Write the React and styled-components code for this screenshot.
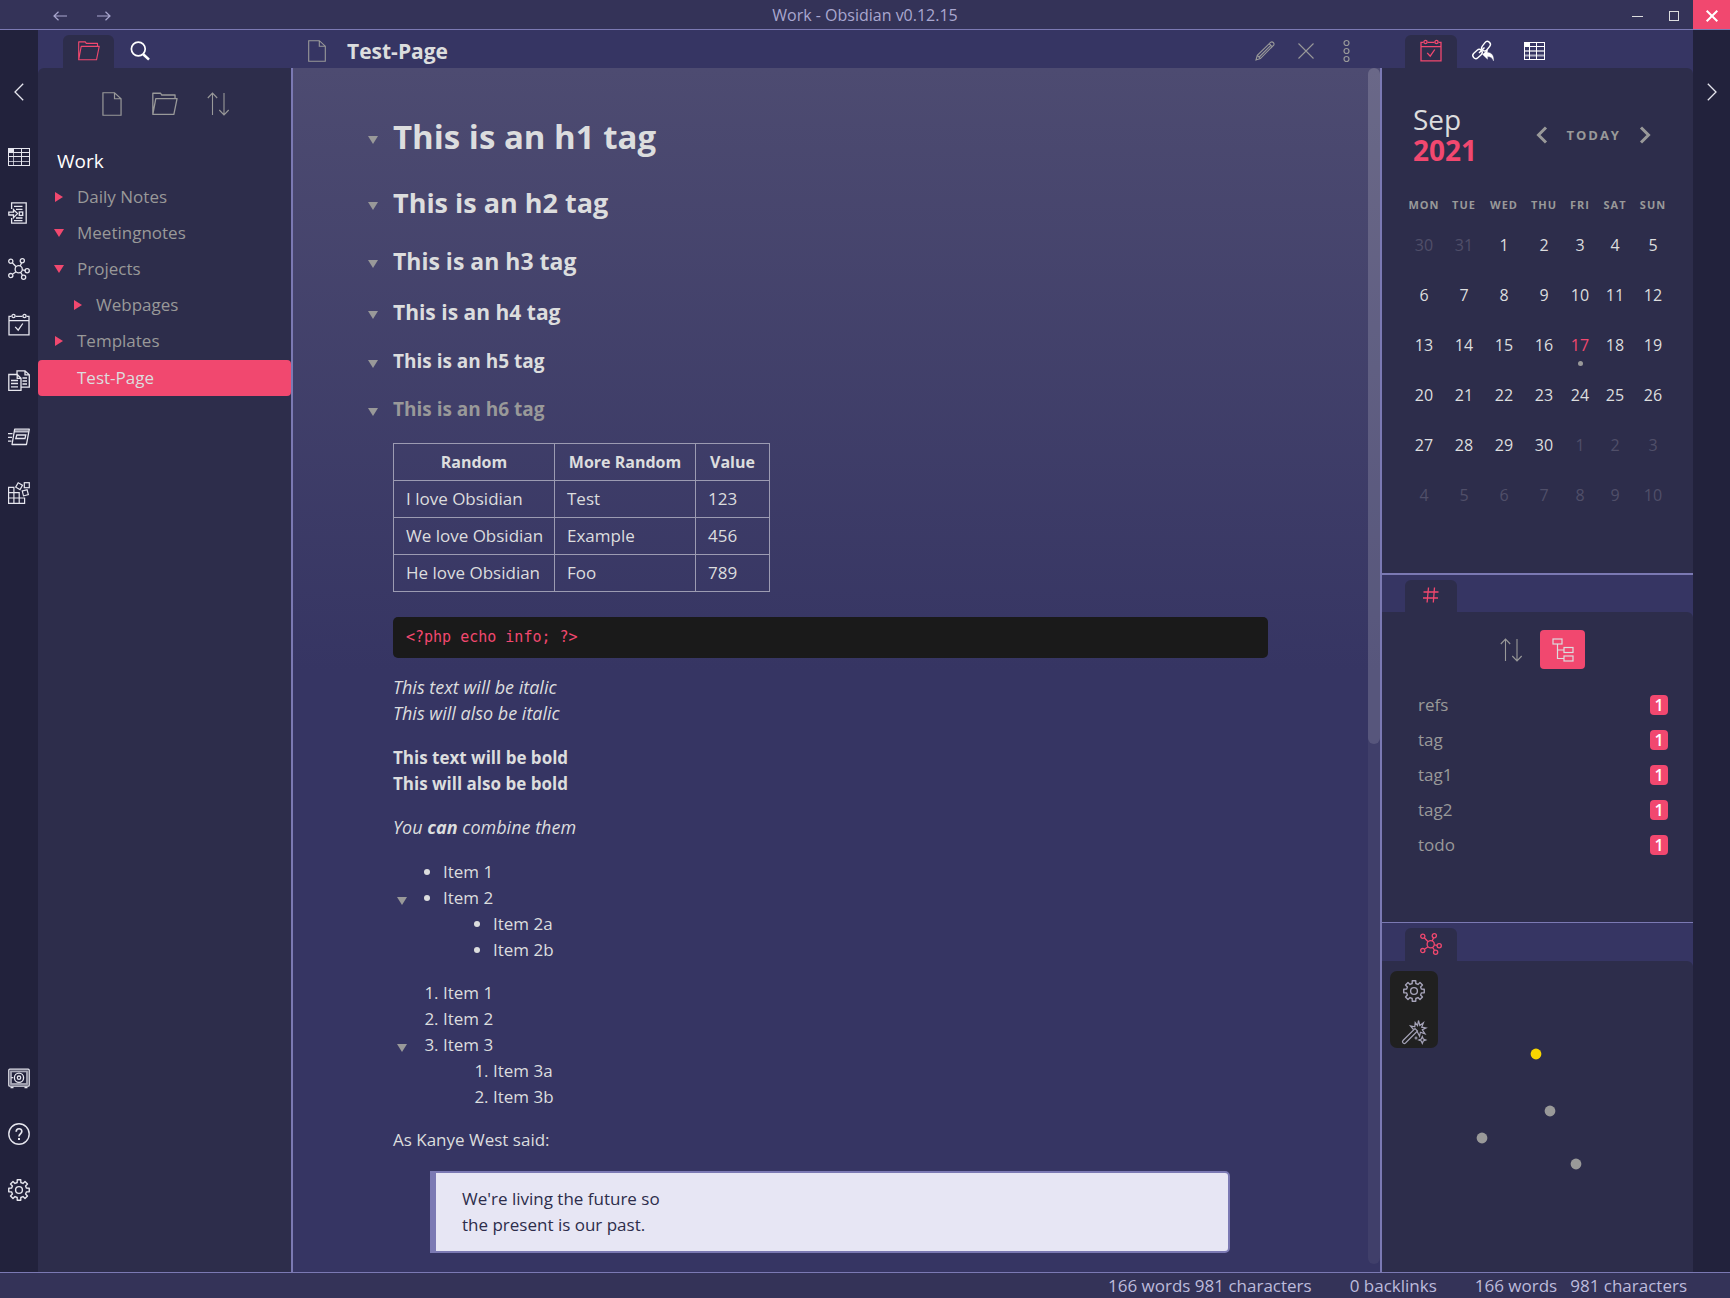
import React from "react";
import styled, { createGlobalStyle, css } from "styled-components";

const c = {
  accent: "#f1486f",
  line: "#7b79b3",
  bar: "#343358",
  header: "#363563",
  panel: "#2d2d4b",
  ribbon: "#22223c",
  text: "#dcddde",
  muted: "#999999",
  faint: "#504f69",
  status: "#bdbbdc",
};

const Global = createGlobalStyle`
  *, *::before, *::after { box-sizing: border-box; }
  body {
    margin: 0;
    background: ${c.panel};
    color: ${c.text};
    font: 17px/26px "Open Sans", "Noto Sans", sans-serif;
  }
  button {
    margin: 0;
    padding: 0;
    border: 0;
    background: none;
    color: inherit;
    font: inherit;
    cursor: pointer;
  }
`;

/* ---------- icons ---------- */

const Svg = styled.svg`
  display: block;
  flex: none;
  fill: none;
  stroke: currentColor;
  stroke-width: ${(p) => p.$stroke ?? 1.3};
  overflow: visible;
`;

const Icon = ({ w = 22, h = 22, stroke, children }) => (
  <Svg width={w} height={h} viewBox={`0 0 ${w} ${h}`} $stroke={stroke} aria-hidden="true">
    {children}
  </Svg>
);

const gearPath = (() => {
  const pts = [];
  const teeth = 8;
  for (let i = 0; i < teeth; i++) {
    const a = (i * 2 * Math.PI) / teeth - Math.PI / 2;
    [
      [-0.24, 7.7],
      [-0.17, 10.4],
      [0.17, 10.4],
      [0.24, 7.7],
    ].forEach(([d, r]) => pts.push(`${(11 + r * Math.cos(a + d)).toFixed(2)} ${(11 + r * Math.sin(a + d)).toFixed(2)}`));
  }
  return `M${pts.join("L")}Z`;
})();

const GearIcon = () => (
  <Icon stroke={1.4}>
    <path d={gearPath} strokeLinejoin="round" />
    <circle cx="11" cy="11" r="3.4" />
  </Icon>
);

const GridIcon = () => (
  <Icon stroke={1}>
    <rect x=".5" y="2.5" width="21" height="17" />
    <rect x=".5" y="2.5" width="5" height="4" fill="currentColor" />
    <path d="M5.5 6.5h16M13.5 2.5v17M.5 10.5h21" />
    <path d="M5.5 6.5v13M.5 15.5h21" opacity=".75" />
  </Icon>
);

const TableIcon = () => (
  <Icon stroke={1}>
    <rect x=".5" y="2.5" width="20" height="17" />
    <rect x=".5" y="2.5" width="5" height="4" fill="currentColor" />
    <path d="M5.5 7v12.5M12.5 2.5v17M5.5 6.5h15" />
    <path d="M.5 11h20M.5 15.5h20" strokeWidth="2" opacity=".6" />
  </Icon>
);

const InsertIcon = () => (
  <Icon>
    <path d="M3.6 7V.8h14.6v20.4H3.6V16" />
    <path d="M.8 10.2h4.7V7.6l4 4-4 4V13H.8z" />
    <path d="M6 4.3h8.500M8 7.300h6.500M8 16h6.500M6 18.600h8.500" />
    <rect x="11.3" y="10" width="3.4" height="3.4" />
  </Icon>
);

const GraphIcon = () => (
  <Icon>
    <circle cx="10.7" cy="11.3" r="3.6" />
    <circle cx="2.8" cy="3.2" r="2.1" />
    <circle cx="14.3" cy="2.8" r="2.1" />
    <circle cx="19.2" cy="12.8" r="2.1" />
    <circle cx="15.6" cy="19.3" r="2.1" />
    <circle cx="2.8" cy="17.6" r="2.1" />
    <path d="M4.3 4.7l3.8 4M13.6 4.8l-1.4 3.200M14.300 11.800l2.800.6M12.600 14.400l2 3.100M4.400 16.200l3.700-2.500" />
  </Icon>
);

const CalendarIcon = () => (
  <Icon>
    <path d="M3.4 2.4H1v18.4h20V2.4h-2.4M7.6 2.4h6.8M1 6.7h20" />
    <circle cx="5.5" cy="2" r="1.6" />
    <circle cx="16.5" cy="2" r="1.6" />
    <path d="M7.2 12.9l3 3.3 4.6-6.7" />
  </Icon>
);

const CopyIcon = () => (
  <Icon>
    <path d="M.8 4.5h8.4l3.8 3.8v12H.8zM9.2 4.5v3.8H13" />
    <path d="M9 4.3V.8h8l4.3 4v12.4H13M17 .8v4h4.3" />
    <path d="M3 10.5h7M3 13.5h7M3 16.8h7M14.5 8h4.5M14.5 11h4.5M14.5 14h4.5" />
  </Icon>
);

const CardsIcon = () => (
  <Icon>
    <path d="M6.7 3.2h14.6l-2.8 15.3H4z" strokeLinejoin="round" />
    <path d="M6.4 5.4h14.2" strokeWidth="2.2" opacity=".8" />
    <path d="M8.8 9h9l-.8 3.5H7.8z" />
    <path d="M0 7.6h4.5M0 11.4h4M0 15.2h3.5" />
  </Icon>
);

const BlocksIcon = () => (
  <Icon stroke={1.2}>
    <path d="M.6 5.4h5.3v16H.6zM.6 10.7h10.6v10.7M.6 16h16v5.4H.6M11.2 16v-5.3" />
    <rect x="16.3" y=".7" width="5" height="5" />
    <rect x="8.6" y="1.7" width="5" height="5" transform="rotate(30 11.1 4.2)" />
    <rect x="14.8" y="8.3" width="5" height="5" transform="rotate(-15 17.3 10.8)" />
  </Icon>
);

const VaultIcon = () => (
  <Icon>
    <rect x=".8" y="2.2" width="20.4" height="17" rx="1" />
    <rect x="3" y="4.4" width="16" height="12.6" strokeWidth="1.8" opacity=".7" />
    <circle cx="11" cy="10.7" r="4.6" />
    <circle cx="11" cy="10.7" r="1.7" />
    <path d="M3.2 10.7h2M2.5 20.5h3M16.5 20.5h3" />
  </Icon>
);

const HelpIcon = () => (
  <Icon stroke={1.4}>
    <circle cx="11" cy="11" r="10.2" />
    <path d="M8.2 8.7c0-4 5.8-3.8 5.6-.2-.1 2.4-2.8 2.3-2.8 5" strokeWidth="1.7" />
    <path d="M11 15v1.9" strokeWidth="2" />
  </Icon>
);

const ChevronIcon = ({ right }) => (
  <Icon w={10} h={18}>
    <path d={right ? "M.8 .8L9 9L.8 17.2" : "M9.2 .8L1 9L9.2 17.2"} />
  </Icon>
);

const BoldChevron = ({ right }) => (
  <Icon w={12} h={18} stroke={3}>
    <path d={right ? "M2 1.5L9.5 9L2 16.5" : "M10 1.5L2.5 9L10 16.5"} />
  </Icon>
);

const FolderIcon = ({ w = 22, h = 20 }) => (
  <Svg width={w} height={h} viewBox="0 0 22 20" $stroke={1.1} aria-hidden="true">
    <path d="M.7 18.8V.9h6.6l1 1.5h11.2v3M.7 18.8h17.8L21.2 5.4H3.2z" strokeLinejoin="round" />
  </Svg>
);

const FileIcon = ({ w = 18, h = 22 }) => (
  <Svg width={w} height={h} viewBox="0 0 18 22" $stroke={1.1} aria-hidden="true">
    <path d="M.7 .7h10.6l6 5.5v15.1H.7zM11.3 .7v5.5h6" />
  </Svg>
);

const SearchIcon = () => (
  <Icon w={20} h={20} stroke={1.7}>
    <circle cx="8.3" cy="8" r="6.9" />
    <path d="M13.2 13.2l5.8 5.4" strokeWidth="2.6" />
  </Icon>
);

const SortIcon = () => (
  <Icon w={22} h={24} stroke={1.1}>
    <path d="M5.5 23V1M.8 6l4.7-5 4.7 5M17 1v22M12.3 18l4.7 5 4.7-5" />
  </Icon>
);

const TreeIcon = () => (
  <Icon w={22} h={24} stroke={1.2}>
    <rect x="1" y="1" width="9" height="5" />
    <rect x="12" y="9.5" width="9" height="5" />
    <rect x="12" y="18" width="9" height="5" />
    <path d="M5.5 6v14.5H12M5.5 12H12" />
  </Icon>
);

const PencilIcon = () => (
  <Icon w={20} h={20} stroke={1.1}>
    <path d="M1 19l1.3-4.6L15.8 1.2c1.6-1.2 4 1 2.9 2.9L5.4 17.6zM2.3 14.4l3.1 3.2M14.3 2.7l3 3.1M4.2 16L15.8 4.4" />
  </Icon>
);

const CrossIcon = () => (
  <Icon w={16} h={16} stroke={1.1}>
    <path d="M.5 .5l15 15M15.5 .5l-15 15" />
  </Icon>
);

const MoreIcon = () => (
  <Icon w={7} h={22} stroke={1.2}>
    <circle cx="3.5" cy="3" r="2.5" />
    <circle cx="3.5" cy="11" r="2.5" />
    <circle cx="3.5" cy="19" r="2.5" />
  </Icon>
);

const BacklinkIcon = () => (
  <Icon stroke={1.4}>
    <rect x="8.8" y="3.2" width="10.4" height="6" rx="3" transform="rotate(-52 14 6.2)" />
    <rect x=".3" y="11" width="10.4" height="6" rx="3" transform="rotate(-42 5.5 14)" />
    <path d="M7 13l5.5-5.5" />
    <path d="M10.5 14.5l5-4.7v2.6c4.5.2 6.5 3.7 6 8.6-1-3-2.8-4.4-6-4.4v2.7z" fill="currentColor" strokeWidth=".3" />
  </Icon>
);

const HashIcon = () => (
  <Icon w={16} h={16}>
    <path d="M5.5 .5l-1.4 15M11.5 .5l-1.2 15M.5 5h15M0 11h15" />
  </Icon>
);

const WandIcon = () => (
  <Icon w={24} h={24} stroke={1.2}>
    <path d="M1 20.5L13 8.5l2.5 2.5L3.5 23c-1.8 1.5-4-.8-2.5-2.5z" />
    <path d="M11.5 9.5L8.5 6l4.3.8L13.2 2.5l2.3 3L16.5.5l1.3 5 3.6-2.7-1.7 4.4L24 8l-3.7 1.8 2.7 4-4.6-1.6-.8 4-2.6-5" />
    <path d="M20.3 16.5l1 2.5 2.5 1-2.5 1-1 2.5-1-2.5-2.5-1 2.5-1zM14 16.5v3M12.5 18h3" />
  </Icon>
);

const ArrowIcon = ({ right }) => (
  <Icon w={14} h={10} stroke={1.2}>
    <path d={right ? "M0 5h13M8.5 .8L13 5L8.5 9.2" : "M14 5H1M5.5 .8L1 5L5.5 9.2"} />
  </Icon>
);

const Triangle = ({ right }) => (
  <Svg width="10" height="10" viewBox="0 0 10 10" $stroke={0} aria-hidden="true">
    <path d={right ? "M1 0L9 5L1 10z" : "M0 1h10L5 9z"} fill="currentColor" />
  </Svg>
);

/* ---------- frame ---------- */

const Shell = styled.div`
  display: flex;
  flex-direction: column;
  min-height: 100vh;
`;

const TitleBar = styled.header`
  display: grid;
  grid-template-columns: 1fr auto 1fr;
  align-items: center;
  height: 30px;
  background: ${c.bar};
  border-bottom: 1px solid ${c.line};
  color: #a9a7cf;
`;

const WindowTitle = styled.span`
  font-size: 16px;
  line-height: 24px;
`;

const NavButtons = styled.div`
  display: flex;
  gap: 30px;
  padding: 2px 0 0 53px;
`;

const WindowButtons = styled.div`
  display: flex;
  justify-content: flex-end;
  height: 29px;
`;

const WindowButton = styled.button`
  display: grid;
  place-items: center;
  width: 37px;
  padding-top: 3px;
  color: ${c.text};
  ${(p) => p.$close && css`background: ${c.accent}; color: #fff;`}
`;

const Main = styled.main`
  flex: 1;
  display: flex;
  min-height: 0;
`;

const Ribbon = styled.nav`
  flex: none;
  display: flex;
  flex-direction: column;
  align-items: center;
  width: ${(p) => (p.$right ? 37 : 38)}px;
  padding: 53px 0 71px;
  background: ${c.ribbon};
  color: #e6e6ee;
`;

const RibbonGroup = styled.div`
  display: flex;
  flex-direction: column;
  gap: 34px;
  margin-top: ${(p) => (p.$bottom ? "auto" : "45px")};
`;

const Panel = styled.section`
  display: flex;
  flex-direction: column;
  background: ${c.header};
`;

const Explorer = styled(Panel)`
  flex: none;
  width: 253px;
`;

const Tabs = styled.div`
  flex: none;
  display: flex;
  height: ${(p) => (p.$short ? 37 : 38)}px;
  padding: 5px 0 0 ${(p) => (p.$wide ? 25 : 23)}px;
`;

const Tab = styled.button`
  display: flex;
  justify-content: center;
  align-items: center;
  width: 51px;
  padding-bottom: 2px;
  border-radius: 6px 6px 0 0;
  color: #fff;
  ${(p) => p.$active && css`background: ${c.panel}; color: ${c.accent};`}
`;

const SideTab = styled(Tab)`
  width: 52px;
`;

const PanelBody = styled.div`
  flex: 1;
  background: ${c.panel};
  border-radius: ${(p) => (p.$left ? "6px 0 0 0" : "0 6px 0 0")};
`;

/* ---------- file explorer ---------- */

const Actions = styled.div`
  display: flex;
  justify-content: center;
  align-items: center;
  height: 24px;
  margin-top: 24px;
  color: ${c.muted};
`;

const Action = styled.button`
  display: flex;
  justify-content: center;
  width: 53px;
`;

const VaultName = styled.h2`
  margin: 31px 0 5px 19px;
  color: #fff;
  font-size: 19px;
  font-weight: 400;
  line-height: 28px;
`;

const TreeRow = styled.button`
  display: flex;
  align-items: center;
  gap: 13px;
  width: 100%;
  height: 36px;
  padding: 0 0 2px ${(p) => 16 + p.$depth * 19}px;
  border-radius: 4px;
  color: ${c.muted};
  ${(p) => p.$active && css`background: ${c.accent}; color: ${c.text}; padding: 0 0 0 39px;`}
`;

const Mark = styled.span`
  color: ${c.accent};
`;

/* ---------- editor ---------- */

const Editor = styled.section`
  flex: 1;
  display: flex;
  flex-direction: column;
  min-width: 0;
  background: ${c.header};
`;

const EditorHeader = styled.header`
  flex: none;
  display: flex;
  align-items: center;
  height: 38px;
  padding: 3px 15px 0 17px;
  color: ${c.muted};
`;

const PageTitle = styled.h1`
  flex: 1;
  margin: 0 0 0 21px;
  color: ${c.text};
  font-size: 21px;
  line-height: 28px;
`;

const HeaderActions = styled.div`
  display: flex;
  align-items: center;
`;

const HeaderButton = styled.button`
  display: flex;
  justify-content: center;
  width: 41px;
`;

const EditorBody = styled.div`
  flex: 1;
  display: flex;
  min-height: 0;
  border: solid ${c.line};
  border-width: 0 2px;
  background: linear-gradient(#4d4b71, ${c.header} 50%);
`;

const Article = styled.article`
  flex: 1;
  min-width: 0;
  padding: 49px 100px 10px;

  em { font-size: 18px; line-height: 20px; }
`;

const ScrollTrack = styled.div`
  flex: none;
  width: 12px;
  margin-bottom: 8px;
  border-radius: 6px;
  background: rgba(255, 255, 255, 0.05);
`;

const ScrollThumb = styled.div`
  height: 56.5%;
  border-radius: 6px;
  background: rgba(255, 255, 255, 0.12);
`;

const headingSizes = {
  1: [33, 40, 29],
  2: [27, 34, 26],
  3: [23, 30, 22],
  4: [21, 28, 22],
  5: [19, 26, 22],
  6: [19, 26, 21],
};

const HeadingRow = styled.div`
  display: flex;
  align-items: center;
  margin: 0 0 ${(p) => headingSizes[p.$level][2]}px -26px;
`;

const Fold = styled.button`
  width: 26px;
  padding: 6px 0 0 1px;
  color: ${c.muted};
`;

const Heading = styled.h2`
  margin: 0;
  font-size: ${(p) => headingSizes[p.$level][0]}px;
  line-height: ${(p) => headingSizes[p.$level][1]}px;
  ${(p) => p.$level === 6 && css`color: ${c.muted};`}
`;

const NoteTable = styled.table`
  width: 376px;
  margin: 0 0 25px;
  border-collapse: collapse;
  table-layout: fixed;
`;

const cell = css`
  height: 37px;
  padding: 0 12px;
  border: 1px solid #9c9bb2;
  white-space: nowrap;
`;

const Th = styled.th`
  ${cell}
  font-size: 16px;
`;

const Td = styled.td`
  ${cell}
`;

const CodeBlock = styled.pre`
  margin: 0 0 17px;
  padding: 7px 13px 8px;
  border-radius: 5px;
  background: #1a1a1a;
  color: ${c.accent};
  font: 15px/26px "DejaVu Sans Mono", "Liberation Mono", monospace;
`;

const P = styled.p`
  margin: 0 0 18px;
`;

const listStyle = css`
  margin: 0;
  padding-left: 50px;
  article > & {
    margin-bottom: 17px;
  }
`;

const Ul = styled.ul`
  ${listStyle}
  list-style-type: disc;
`;

const Ol = styled.ol`
  ${listStyle}
`;

const ListFold = styled.button`
  width: 10px;
  height: 10px;
  margin: 0 36px 0 -46px;
  vertical-align: -2px;
  color: ${c.muted};
`;

const Quote = styled.blockquote`
  margin: 18px 38px 0 37px;
  padding: 13px 26px;
  border: 2px solid ${c.line};
  border-left-width: 6px;
  border-radius: 0 5px 5px 0;
  background: #e7e6f4;
  color: #2d2d4b;
`;

/* ---------- right side ---------- */

const Sidebar = styled.aside`
  flex: none;
  display: flex;
  flex-direction: column;
  width: 311px;
`;

const SidePanel = styled(Panel)`
  flex: ${(p) => p.$share} 1 0;
  border-bottom: ${(p) => p.$rule || 0}px solid ${c.line};
`;

const CalendarHead = styled.div`
  display: flex;
  align-items: center;
  justify-content: space-between;
  padding: 36px 42px 0 31px;
`;

const Month = styled.h2`
  margin: 0;
  font-size: 28px;
  font-weight: 400;
  line-height: 31px;
`;

const Year = styled.span`
  display: block;
  color: ${c.accent};
  font-weight: 700;
`;

const MonthNav = styled.div`
  display: flex;
  align-items: center;
  gap: 18px;
  color: ${c.muted};
`;

const Today = styled.button`
  font-size: 13px;
  font-weight: 700;
  line-height: 20px;
  letter-spacing: 2px;
`;

const Days = styled.table`
  width: 270px;
  margin: 30px 0 0 21px;
  border-collapse: collapse;
  table-layout: fixed;
  text-align: center;
`;

const Weekday = styled.th`
  height: 33px;
  padding: 0;
  color: ${c.muted};
  font-size: 11px;
  font-weight: 700;
  line-height: 18px;
  letter-spacing: 1px;
  vertical-align: top;
`;

const DayCell = styled.td`
  height: 50px;
  padding: 0;
  vertical-align: top;
`;

const Day = styled.button`
  width: 100%;
  color: ${(p) => (p.$today ? c.accent : p.$faint ? c.faint : c.text)};
  font-size: 16px;
  line-height: 32px;
`;

const Dot = styled.span`
  display: block;
  width: 5px;
  height: 5px;
  margin: 0 auto;
  border-radius: 50%;
  background: ${c.muted};
`;

const TagTools = styled.div`
  display: flex;
  justify-content: center;
  align-items: center;
  gap: 18px;
  margin: 18px 0;
  padding-left: 10px;
  color: ${c.muted};
`;

const TagToggle = styled.button`
  display: grid;
  place-items: center;
  width: 45px;
  height: 39px;
  border-radius: 4px;
  background: ${c.accent};
  color: ${c.text};
`;

const TagRow = styled.a`
  display: flex;
  align-items: center;
  justify-content: space-between;
  height: 35px;
  padding: 0 25px 0 36px;
  color: ${c.muted};
  text-decoration: none;
`;

const Count = styled.span`
  width: 18px;
  border-radius: 4px;
  background: ${c.accent};
  color: #fff;
  font-size: 16px;
  font-weight: 600;
  line-height: 20px;
  text-align: center;
`;

const GraphBody = styled(PanelBody)`
  display: flex;
  align-items: flex-start;
  padding: 10px 8px;
`;

const GraphTools = styled.div`
  flex: none;
  display: flex;
  flex-direction: column;
  align-items: center;
  gap: 18px;
  width: 48px;
  padding: 9px 0 4px;
  border-radius: 7px;
  background: #202020;
  color: #a5a3b8;
`;

const StatusBar = styled.footer`
  display: flex;
  justify-content: flex-end;
  gap: 38px;
  height: 26px;
  padding-right: 43px;
  border-top: 1px solid ${c.line};
  background: ${c.bar};
  color: ${c.status};
`;

const StatusPair = styled.span`
  display: flex;
  gap: 13px;
`;

/* ---------- content ---------- */

const ribbonTop = [
  ["Tables", GridIcon],
  ["Insert template", InsertIcon],
  ["Graph view", GraphIcon],
  ["Daily note", CalendarIcon],
  ["Duplicate", CopyIcon],
  ["Cards", CardsIcon],
  ["Blocks", BlocksIcon],
];

const ribbonBottom = [
  ["Open vault", VaultIcon],
  ["Help", HelpIcon],
  ["Settings", GearIcon],
];

const tree = [
  { name: "Daily Notes", depth: 0, closed: true },
  { name: "Meetingnotes", depth: 0 },
  { name: "Projects", depth: 0 },
  { name: "Webpages", depth: 1, closed: true },
  { name: "Templates", depth: 0, closed: true },
  { name: "Test-Page", depth: 0, file: true },
];

const rows = [
  ["I love Obsidian", "Test", "123"],
  ["We love Obsidian", "Example", "456"],
  ["He love Obsidian", "Foo", "789"],
];

const weekdays = [
  ["MON", 42],
  ["TUE", 38],
  ["WED", 42],
  ["THU", 38],
  ["FRI", 34],
  ["SAT", 36],
  ["SUN", 40],
];

const weeks = Array.from({ length: 6 }, (_, w) =>
  Array.from({ length: 7 }, (_, d) => {
    const n = w * 7 + d - 1;
    if (n < 1) return { n: n + 31, faint: true };
    if (n > 30) return { n: n - 30, faint: true };
    return { n, today: n === 17 };
  })
);

const tags = ["refs", "tag", "tag1", "tag2", "todo"];

const nodes = [
  [98, 83, "#f8d600"],
  [112, 140, c.muted],
  [44, 167, c.muted],
  [138, 193, c.muted],
];

const RibbonButtons = ({ items }) =>
  items.map(([label, Glyph]) => (
    <button key={label} type="button" aria-label={label}>
      <Glyph />
    </button>
  ));

export default function App() {
  return (
    <Shell>
      <Global />
      <TitleBar>
        <NavButtons>
          <button type="button" aria-label="Back"><ArrowIcon /></button>
          <button type="button" aria-label="Forward"><ArrowIcon right /></button>
        </NavButtons>
        <WindowTitle>Work - Obsidian v0.12.15</WindowTitle>
        <WindowButtons>
          <WindowButton type="button" aria-label="Minimize">
            <Icon w={12} h={12} stroke={1}><path d="M0 6.5h11" /></Icon>
          </WindowButton>
          <WindowButton type="button" aria-label="Maximize">
            <Icon w={11} h={11} stroke={1}><rect x=".5" y=".5" width="9" height="9" /></Icon>
          </WindowButton>
          <WindowButton type="button" aria-label="Close" $close>
            <Icon w={12} h={12} stroke={2}><path d="M.7 .7l10.6 10.6M11.3 .7L.7 11.3" /></Icon>
          </WindowButton>
        </WindowButtons>
      </TitleBar>

      <Main>
        <Ribbon aria-label="Ribbon">
          <button type="button" aria-label="Collapse left sidebar"><ChevronIcon /></button>
          <RibbonGroup><RibbonButtons items={ribbonTop} /></RibbonGroup>
          <RibbonGroup $bottom><RibbonButtons items={ribbonBottom} /></RibbonGroup>
        </Ribbon>

        <Explorer>
          <Tabs $wide>
            <Tab type="button" $active aria-label="Files"><FolderIcon /></Tab>
            <Tab type="button" aria-label="Search"><SearchIcon /></Tab>
          </Tabs>
          <PanelBody $left>
            <Actions>
              <Action type="button" aria-label="New note"><FileIcon w={20} h={24} /></Action>
              <Action type="button" aria-label="New folder"><FolderIcon w={26} h={24} /></Action>
              <Action type="button" aria-label="Sort files"><SortIcon /></Action>
            </Actions>
            <VaultName>Work</VaultName>
            {tree.map((t) => (
              <TreeRow key={t.name} type="button" $depth={t.depth} $active={t.file}>
                {!t.file && <Mark><Triangle right={t.closed} /></Mark>}
                {t.name}
              </TreeRow>
            ))}
          </PanelBody>
        </Explorer>

        <Editor>
          <EditorHeader>
            <FileIcon />
            <PageTitle>Test-Page</PageTitle>
            <HeaderActions>
              <HeaderButton type="button" aria-label="Edit"><PencilIcon /></HeaderButton>
              <HeaderButton type="button" aria-label="Close note"><CrossIcon /></HeaderButton>
              <HeaderButton type="button" aria-label="More options"><MoreIcon /></HeaderButton>
            </HeaderActions>
          </EditorHeader>
          <EditorBody>
            <Article>
              {[1, 2, 3, 4, 5, 6].map((n) => (
                <HeadingRow key={n} $level={n}>
                  <Fold type="button" aria-label="Fold heading"><Triangle /></Fold>
                  <Heading as={`h${n}`} $level={n}>This is an h{n} tag</Heading>
                </HeadingRow>
              ))}
              <NoteTable>
                <colgroup>
                  <col width="161" />
                  <col width="141" />
                  <col width="74" />
                </colgroup>
                <thead>
                  <tr><Th>Random</Th><Th>More Random</Th><Th>Value</Th></tr>
                </thead>
                <tbody>
                  {rows.map((r) => (
                    <tr key={r[0]}>{r.map((v) => <Td key={v}>{v}</Td>)}</tr>
                  ))}
                </tbody>
              </NoteTable>
              <CodeBlock>{"<?php echo info; ?>"}</CodeBlock>
              <P><em>This text will be italic</em><br /><em>This will also be italic</em></P>
              <P><strong>This text will be bold</strong><br /><strong>This will also be bold</strong></P>
              <P><em>You <strong>can</strong> combine them</em></P>
              <Ul>
                <li>Item 1</li>
                <li>
                  <ListFold type="button" aria-label="Fold list"><Triangle /></ListFold>Item 2
                  <Ul><li>Item 2a</li><li>Item 2b</li></Ul>
                </li>
              </Ul>
              <Ol>
                <li>Item 1</li>
                <li>Item 2</li>
                <li>
                  <ListFold type="button" aria-label="Fold list"><Triangle /></ListFold>Item 3
                  <Ol><li>Item 3a</li><li>Item 3b</li></Ol>
                </li>
              </Ol>
              <P>As Kanye West said:</P>
              <Quote>We're living the future so<br />the present is our past.</Quote>
            </Article>
            <ScrollTrack><ScrollThumb /></ScrollTrack>
          </EditorBody>
        </Editor>

        <Sidebar>
          <SidePanel $share={543} $rule={2}>
            <Tabs>
              <SideTab type="button" $active aria-label="Calendar"><CalendarIcon /></SideTab>
              <SideTab type="button" aria-label="Backlinks"><BacklinkIcon /></SideTab>
              <SideTab type="button" aria-label="Table tools"><TableIcon /></SideTab>
            </Tabs>
            <PanelBody>
              <CalendarHead>
                <Month>Sep <Year>2021</Year></Month>
                <MonthNav>
                  <button type="button" aria-label="Previous month"><BoldChevron /></button>
                  <Today type="button">TODAY</Today>
                  <button type="button" aria-label="Next month"><BoldChevron right /></button>
                </MonthNav>
              </CalendarHead>
              <Days>
                <colgroup>{weekdays.map(([d, w]) => <col key={d} width={w} />)}</colgroup>
                <thead>
                  <tr>{weekdays.map(([d]) => <Weekday key={d}>{d}</Weekday>)}</tr>
                </thead>
                <tbody>
                  {weeks.map((week, i) => (
                    <tr key={i}>
                      {week.map((d) => (
                        <DayCell key={d.n}>
                          <Day type="button" $today={d.today} $faint={d.faint}>{d.n}</Day>
                          {d.today && <Dot />}
                        </DayCell>
                      ))}
                    </tr>
                  ))}
                </tbody>
              </Days>
            </PanelBody>
          </SidePanel>

          <SidePanel $share={347} $rule={1}>
            <Tabs $short>
              <SideTab type="button" $active aria-label="Tags"><HashIcon /></SideTab>
            </Tabs>
            <PanelBody>
              <TagTools>
                <button type="button" aria-label="Sort tags"><SortIcon /></button>
                <TagToggle type="button" aria-label="Show nested tags"><TreeIcon /></TagToggle>
              </TagTools>
              {tags.map((t) => (
                <TagRow key={t} href={`#${t}`}>{t}<Count>1</Count></TagRow>
              ))}
            </PanelBody>
          </SidePanel>

          <SidePanel $share={349}>
            <Tabs>
              <SideTab type="button" $active aria-label="Graph"><GraphIcon /></SideTab>
            </Tabs>
            <GraphBody>
              <GraphTools>
                <button type="button" aria-label="Graph settings"><GearIcon /></button>
                <button type="button" aria-label="Animate graph"><WandIcon /></button>
              </GraphTools>
              <Svg width="247" height="280" viewBox="0 0 247 280" $stroke={0} role="img" aria-label="Note graph">
                {nodes.map(([x, y, fill]) => <circle key={x} cx={x} cy={y} r="5.4" fill={fill} />)}
              </Svg>
            </GraphBody>
          </SidePanel>
        </Sidebar>

        <Ribbon $right aria-label="Right ribbon">
          <button type="button" aria-label="Collapse right sidebar"><ChevronIcon right /></button>
        </Ribbon>
      </Main>

      <StatusBar>
        <span>166 words 981 characters</span>
        <span>0 backlinks</span>
        <StatusPair><span>166 words</span><span>981 characters</span></StatusPair>
      </StatusBar>
    </Shell>
  );
}
